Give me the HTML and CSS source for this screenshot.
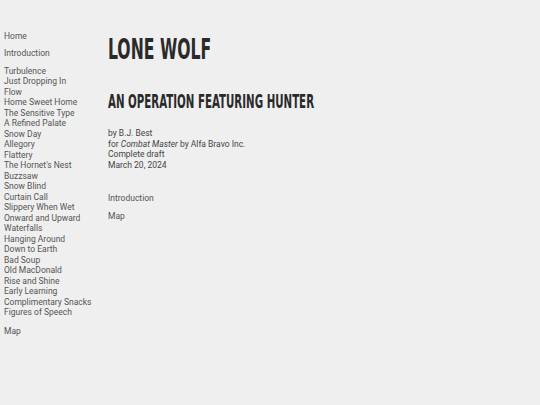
FILE: index.html
```html
<!DOCTYPE html>
<html>
<head>
<meta charset="utf-8">
<link rel="stylesheet" href="styles.css">
</head>
<body>
<div class="page">
  <nav class="sidebar">
    <ul class="group"><li><a href="#">Home</a></li></ul>
    <ul class="group"><li><a href="#">Introduction</a></li></ul>
    <ul class="group">
      <li><a href="#">Turbulence</a></li>
      <li><a href="#">Just Dropping In</a></li>
      <li><a href="#">Flow</a></li>
      <li><a href="#">Home Sweet Home</a></li>
      <li><a href="#">The Sensitive Type</a></li>
      <li><a href="#">A Refined Palate</a></li>
      <li><a href="#">Snow Day</a></li>
      <li><a href="#">Allegory</a></li>
      <li><a href="#">Flattery</a></li>
      <li><a href="#">The Hornet's Nest</a></li>
      <li><a href="#">Buzzsaw</a></li>
      <li><a href="#">Snow Blind</a></li>
      <li><a href="#">Curtain Call</a></li>
      <li><a href="#">Slippery When Wet</a></li>
      <li><a href="#">Onward and Upward</a></li>
      <li><a href="#">Waterfalls</a></li>
      <li><a href="#">Hanging Around</a></li>
      <li><a href="#">Down to Earth</a></li>
      <li><a href="#">Bad Soup</a></li>
      <li><a href="#">Old MacDonald</a></li>
      <li><a href="#">Rise and Shine</a></li>
      <li><a href="#">Early Learning</a></li>
      <li><a href="#">Complimentary Snacks</a></li>
      <li><a href="#">Figures of Speech</a></li>
    </ul>
    <ul class="group"><li><a href="#">Map</a></li></ul>
  </nav>
  <main class="main">
    <h1 class="title"><span class="squeeze">LONE WOLF</span></h1>
    <h2 class="subtitle"><span class="squeeze">AN OPERATION FEATURING HUNTER</span></h2>
    <div class="meta">
      <p>by B.J. Best</p>
      <p>for <em>Combat Master</em> by Alfa Bravo Inc.</p>
      <p>Complete draft</p>
      <p>March 20, 2024</p>
    </div>
    <ul class="links">
      <li><a href="#">Introduction</a></li>
      <li><a href="#">Map</a></li>
    </ul>
  </main>
</div>
</body>
</html>
```
FILE: styles.css
```css
html, body {
  margin: 0;
  padding: 0;
  background: #efefef;
}
body {
  font-family: Roboto, "Liberation Sans", sans-serif;
  font-size: 8.5px;
  line-height: 10.5px;
  color: #444;
}
a {
  color: #555;
  text-decoration: none;
}
.page {
  display: flex;
  padding-top: 31px;
}
.sidebar {
  width: 104px;
  padding-left: 4px;
  display: flex;
  flex-direction: column;
  gap: 7px;
}
.group {
  list-style: none;
  margin: 0;
  padding: 0;
}
.group:first-child {
  margin-bottom: -0.5px;
}
.group:last-child {
  margin-top: 1px;
}
.main {
  flex: 1;
}
.title, .subtitle {
  margin: 0;
  font-family: "DejaVu Sans Condensed", "DejaVu Sans", sans-serif;
  font-weight: bold;
  color: #2a2a2a;
  white-space: nowrap;
}
.squeeze {
  display: inline-block;
  transform-origin: left center;
}
.title {
  font-size: 29px;
  line-height: 36px;
  margin-top: 0;
}
.title .squeeze {
  transform: scaleX(0.6);
}
.subtitle {
  font-size: 19px;
  line-height: 22px;
  margin-top: 23px;
}
.subtitle .squeeze {
  transform: scaleX(0.6);
}
.meta {
  margin-top: 16px;
}
.meta p {
  margin: 0;
}
.links {
  list-style: none;
  margin: 23px 0 0;
  padding: 0;
  display: flex;
  flex-direction: column;
  gap: 7.5px;
}
```
